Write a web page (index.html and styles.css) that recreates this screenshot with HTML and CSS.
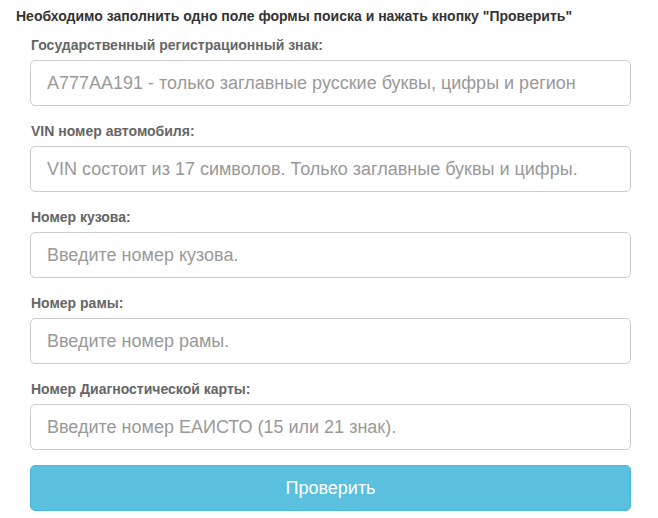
FILE: index.html
```html
<!DOCTYPE html>
<html lang="ru">
<head>
<meta charset="utf-8">
<link rel="stylesheet" href="styles.css">
</head>
<body>
<div class="page">
  <p class="intro">Необходимо заполнить одно поле формы поиска и нажать кнопку "Проверить"</p>
  <form class="form">
    <div class="field">
      <label class="label">Государственный регистрационный знак:</label>
      <input class="input" type="text" placeholder="А777АА191 - только заглавные русские буквы, цифры и регион">
    </div>
    <div class="field">
      <label class="label">VIN номер автомобиля:</label>
      <input class="input" type="text" placeholder="VIN состоит из 17 символов. Только заглавные буквы и цифры.">
    </div>
    <div class="field">
      <label class="label">Номер кузова:</label>
      <input class="input" type="text" placeholder="Введите номер кузова.">
    </div>
    <div class="field">
      <label class="label">Номер рамы:</label>
      <input class="input" type="text" placeholder="Введите номер рамы.">
    </div>
    <div class="field">
      <label class="label">Номер Диагностической карты:</label>
      <input class="input" type="text" placeholder="Введите номер ЕАИСТО (15 или 21 знак).">
    </div>
    <button class="btn" type="button">Проверить</button>
  </form>
</div>
</body>
</html>
```

FILE: styles.css
```css
* { box-sizing: border-box; }
html, body {
  margin: 0;
  padding: 0;
  background: #fff;
  font-family: "Liberation Sans", Arial, sans-serif;
}
.page {
  padding-top: 7px;
}
.intro {
  margin: 0;
  padding-left: 16px;
  font-size: 14px;
  line-height: 18px;
  font-weight: bold;
  color: #333;
}
.form {
  display: flex;
  flex-direction: column;
  padding: 0 27px 0 30px;
}
.field {
  display: flex;
  flex-direction: column;
}
.label {
  display: block;
  margin: 11px 0 6px 1px;
  font-size: 14px;
  line-height: 18px;
  font-weight: bold;
  color: #666;
}
.field + .field .label {
  margin-top: 16px;
}
.input {
  width: 100%;
  height: 46px;
  padding: 0 16px;
  border: 1px solid #ccc;
  border-radius: 5px;
  font-family: "Liberation Sans", Arial, sans-serif;
  font-size: 18px;
  color: #555;
  background: #fff;
  outline: none;
}
.input::placeholder {
  color: #999;
  opacity: 1;
}
.btn {
  margin-top: 15px;
  height: 46px;
  width: 100%;
  border: 1px solid #46b8da;
  border-radius: 5px;
  background: #5bc0de;
  color: #fff;
  font-family: "Liberation Sans", Arial, sans-serif;
  font-size: 18px;
  cursor: pointer;
}
```
